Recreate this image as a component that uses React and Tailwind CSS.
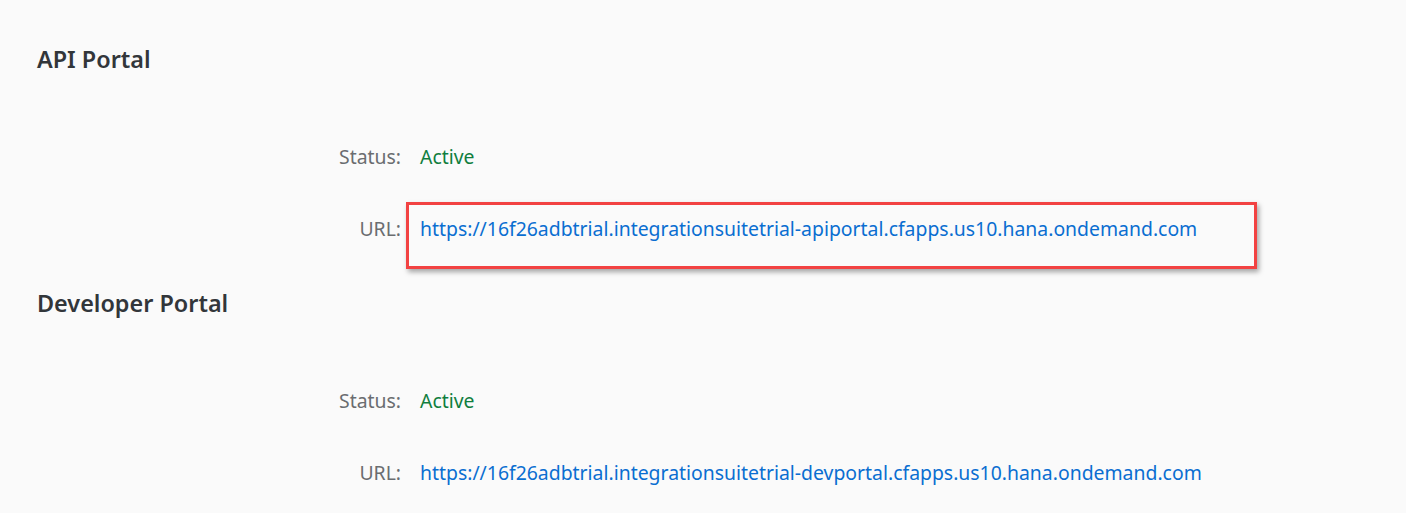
export default function App() {
  const font = { fontFamily: '"Noto Sans", "Open Sans", sans-serif' };
  const Row = ({ label, children, className = "" }) => (
    <div className={"relative flex items-center h-6 " + className}>
      <div className="w-[401px] text-right text-[#6a6d70]">{label}</div>
      <div className="ml-[19px] whitespace-nowrap">{children}</div>
    </div>
  );
  const Section = ({ title, url, boxed }) => (
    <div className="flex flex-col">
      <div className="h-6 flex items-center pl-[37px] text-[23.4px] font-semibold text-[#32363a] mt-[1px] -mb-[1px]">{title}</div>
      <Row label="Status:" className="mt-[74px]">
        <span className="text-[#107e3e]">Active</span>
      </Row>
      <Row label="URL:" className="mt-[48px]">
        <a className="text-[#0a6ed1]" href="#">{url}</a>
        {boxed && (
          <div className="absolute left-[406px] top-[-15px] w-[851px] h-[67px] border-[3px] border-[#f24242] shadow-[2px_3px_5px_rgba(0,0,0,0.35)] pointer-events-none" />
        )}
      </Row>
    </div>
  );
  return (
    <div className="w-[1406px] h-[513px] bg-[#fafafa] overflow-hidden text-[19.4px]" style={font}>
      <div className="pt-[47px] flex flex-col gap-[50px]">
        <Section title="API Portal" url="https://16f26adbtrial.integrationsuitetrial-apiportal.cfapps.us10.hana.ondemand.com" boxed />
        <Section title="Developer Portal" url="https://16f26adbtrial.integrationsuitetrial-devportal.cfapps.us10.hana.ondemand.com" />
      </div>
    </div>
  );
}
